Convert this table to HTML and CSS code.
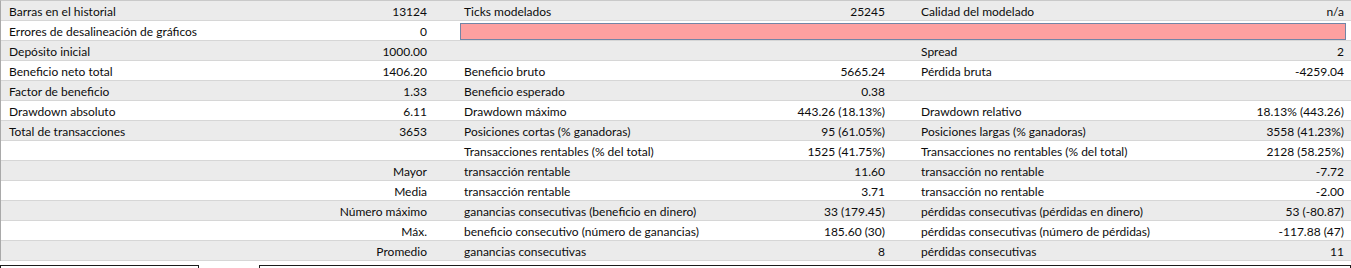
FILE: index.html
```
<!DOCTYPE html>
<html lang="es">
<head>
<meta charset="utf-8">
<title>Informe</title>
<link rel="stylesheet" href="styles.css">
</head>
<body>
<div class="report">
  <div class="row g">
    <div class="cell c1"><span>Barras en el historial</span><span>13124</span></div>
    <div class="cell c2"><span>Ticks modelados</span><span>25245</span></div>
    <div class="cell c3"><span>Calidad del modelado</span><span>n/a</span></div>
  </div>
  <div class="row w">
    <div class="cell c1"><span>Errores de desalineación de gráficos</span><span>0</span></div>
    <div class="cell span23"><div class="quality-bar"></div></div>
  </div>
  <div class="row g">
    <div class="cell c1"><span>Depósito inicial</span><span>1000.00</span></div>
    <div class="cell c2"></div>
    <div class="cell c3"><span>Spread</span><span>2</span></div>
  </div>
  <div class="row w">
    <div class="cell c1"><span>Beneficio neto total</span><span>1406.20</span></div>
    <div class="cell c2"><span>Beneficio bruto</span><span>5665.24</span></div>
    <div class="cell c3"><span>Pérdida bruta</span><span>-4259.04</span></div>
  </div>
  <div class="row g">
    <div class="cell c1"><span>Factor de beneficio</span><span>1.33</span></div>
    <div class="cell c2"><span>Beneficio esperado</span><span>0.38</span></div>
    <div class="cell c3"></div>
  </div>
  <div class="row w">
    <div class="cell c1"><span>Drawdown absoluto</span><span>6.11</span></div>
    <div class="cell c2"><span>Drawdown máximo</span><span>443.26 (18.13%)</span></div>
    <div class="cell c3"><span>Drawdown relativo</span><span>18.13% (443.26)</span></div>
  </div>
  <div class="row g">
    <div class="cell c1"><span>Total de transacciones</span><span>3653</span></div>
    <div class="cell c2"><span>Posiciones cortas (% ganadoras)</span><span>95 (61.05%)</span></div>
    <div class="cell c3"><span>Posiciones largas (% ganadoras)</span><span>3558 (41.23%)</span></div>
  </div>
  <div class="row w">
    <div class="cell c1"></div>
    <div class="cell c2"><span>Transacciones rentables (% del total)</span><span>1525 (41.75%)</span></div>
    <div class="cell c3"><span>Transacciones no rentables (% del total)</span><span>2128 (58.25%)</span></div>
  </div>
  <div class="row g">
    <div class="cell c1 right"><span>Mayor</span></div>
    <div class="cell c2"><span>transacción rentable</span><span>11.60</span></div>
    <div class="cell c3"><span>transacción no rentable</span><span>-7.72</span></div>
  </div>
  <div class="row w">
    <div class="cell c1 right"><span>Media</span></div>
    <div class="cell c2"><span>transacción rentable</span><span>3.71</span></div>
    <div class="cell c3"><span>transacción no rentable</span><span>-2.00</span></div>
  </div>
  <div class="row g">
    <div class="cell c1 right"><span>Número máximo</span></div>
    <div class="cell c2"><span>ganancias consecutivas (beneficio en dinero)</span><span>33 (179.45)</span></div>
    <div class="cell c3"><span>pérdidas consecutivas (pérdidas en dinero)</span><span>53 (-80.87)</span></div>
  </div>
  <div class="row w">
    <div class="cell c1 right"><span>Máx.</span></div>
    <div class="cell c2"><span>beneficio consecutivo (número de ganancias)</span><span>185.60 (30)</span></div>
    <div class="cell c3"><span>pérdidas consecutivas (número de pérdidas)</span><span>-117.88 (47)</span></div>
  </div>
  <div class="row g">
    <div class="cell c1 right"><span>Promedio</span></div>
    <div class="cell c2"><span>ganancias consecutivas</span><span>8</span></div>
    <div class="cell c3"><span>pérdidas consecutivas</span><span>11</span></div>
  </div>
</div>
<div class="bottom">
  <div class="box box-left"></div>
  <div class="box box-right"></div>
</div>
</body>
</html>
```
FILE: styles.css
```
html, body {
  margin: 0;
  padding: 0;
  background: #ffffff;
  overflow: hidden;
}
body {
  width: 1351px;
  height: 268px;
  font-family: "Segoe UI", Lato, "Open Sans", sans-serif;
  font-size: 12px;
  color: #0c0c0c;
}
.report {
  border-top: 1px solid #c9c9c9;
  border-left: 1px solid #a9a9a9;
}
.row {
  display: grid;
  grid-template-columns: 457px 457px 1fr;
  height: 19px;
  border-bottom: 1px solid #d6d6d6;
}
.row.g { background: #ebebeb; }
.row.w { background: #ffffff; }
.cell {
  display: flex;
  justify-content: space-between;
  align-items: flex-start;
  padding-top: 2px;
  line-height: 18px;
  white-space: nowrap;
  box-sizing: border-box;
  height: 19px;
}
.c1 { padding-left: 8px; padding-right: 31px; }
.c2 { padding-left: 6px; padding-right: 30px; }
.c3 { padding-left: 6px; padding-right: 7px; }
.c1.right { justify-content: flex-end; }
.span23 {
  grid-column: 2 / 4;
  padding: 2px 5px 0 2px;
  align-items: stretch;
}
.quality-bar {
  flex: 1;
  background: #fda0a0;
  border: 1px solid #7285a6;
}
.bottom {
  display: flex;
  margin-top: 4px;
  gap: 60px;
}
.box {
  height: 12px;
  border: 1px solid #1c1c1c;
  border-bottom: none;
}
.box-left { width: 197px; }
.box-right { flex: 1; }
```
